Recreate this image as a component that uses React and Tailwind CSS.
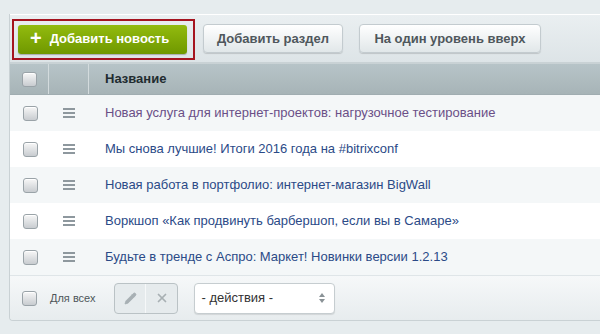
import { Pencil, X } from "lucide-react";

const rows = [
  { title: "Новая услуга для интернет-проектов: нагрузочное тестирование", visited: true },
  { title: "Мы снова лучшие! Итоги 2016 года на #bitrixconf" },
  { title: "Новая работа в портфолио: интернет-магазин BigWall" },
  { title: "Воркшоп «Как продвинуть барбершоп, если вы в Самаре»" },
  { title: "Будьте в тренде с Аспро: Маркет! Новинки версии 1.2.13" },
];

function Check() {
  return (
    <span className="block w-[15px] h-[15px] rounded-[3px] border border-[#9aa3a8] bg-gradient-to-b from-[#f7f7f7] to-[#c8ccd0] shadow-[inset_0_1px_0_#fff]" />
  );
}

function Burger() {
  return (
    <span className="flex flex-col gap-[2px] w-[12px]">
      <span className="h-[2px] bg-[#8e989e]" />
      <span className="h-[2px] bg-[#8e989e]" />
      <span className="h-[2px] bg-[#8e989e]" />
    </span>
  );
}

export default function App() {
  return (
    <div className="w-[600px] h-[334px] overflow-hidden bg-[#e6ecee] pt-[14px] pl-[9px] font-['Liberation_Sans',Arial,sans-serif]">
      <div className="w-[620px] border-l border-b border-[#c9d1d4] rounded-bl-[4px] overflow-hidden">
        {/* toolbar */}
        <div className="h-[48px] border-t border-white bg-gradient-to-b from-[#eaeff1] to-[#dde4e7] flex items-center pl-[2px]">
          <div className="border-2 border-[#a5141f] pl-[4px] pr-[6px] py-[4px] mt-[1px]">
            <button className="h-[29px] w-[169px] rounded-[3px] bg-gradient-to-b from-[#93bb0f] to-[#6f9800] shadow-[0_1px_1px_rgba(0,0,0,0.25)] text-white font-bold text-[13px] flex items-center pl-[12px] gap-[8px]">
              <span className="text-[20px] leading-none font-bold -mt-[2px]">+</span>
              Добавить новость
            </button>
          </div>
          <button className="ml-[8px] h-[29px] w-[140px] rounded-[4px] border border-[#c3cbcf] bg-gradient-to-b from-[#ffffff] to-[#e1e7e9] shadow-[0_1px_1px_rgba(0,0,0,0.15)] text-[#4f575c] font-bold text-[13px]">
            Добавить раздел
          </button>
          <button className="ml-[16px] h-[29px] w-[182px] rounded-[4px] border border-[#c3cbcf] bg-gradient-to-b from-[#ffffff] to-[#e1e7e9] shadow-[0_1px_1px_rgba(0,0,0,0.15)] text-[#4f575c] font-bold text-[13px]">
            На один уровень вверх
          </button>
        </div>

        {/* header */}
        <div className="h-[33px] border-t-2 border-[#c9d2d5] bg-gradient-to-b from-[#b7c4c8] to-[#a7b4b7] flex border-b border-b-[#a0adb1]">
          <div className="w-[39px] flex items-center justify-center pl-[1px] border-r border-[#d3dbdd]">
            <Check />
          </div>
          <div className="w-[40px] border-r border-[#d3dbdd]" />
          <div className="flex-1 flex items-center pl-[16px] text-[13px] font-bold text-[#222c30]">Название</div>
        </div>

        {/* rows */}
        {rows.map((r, i) => (
          <div key={i} className={`h-[36px] flex items-center ${i % 2 === 0 ? "bg-[#f4f7f8]" : "bg-white"}`}>
            <div className="w-[39px] flex justify-center pl-[1px]">
              <Check />
            </div>
            <div className="w-[40px] flex justify-center">
              <Burger />
            </div>
            <div className={`flex-1 pl-[16px] text-[13px] ${r.visited ? "text-[#6a4f87]" : "text-[#2b4a87]"}`}>{r.title}</div>
          </div>
        ))}

        {/* footer */}
        <div className="h-[45px] border-t border-[#dfe5e8] bg-gradient-to-b from-[#f6f8f9] to-[#e7ecee] flex items-center">
          <div className="ml-[12px]">
            <Check />
          </div>
          <span className="ml-[13px] text-[11px] text-[#4d5559]">Для всех</span>
          <div className="ml-[19px] h-[31px] flex rounded-[4px] border border-[#bac2c5] bg-[#e6ebed]">
            <div className="w-[31px] flex items-center justify-center border-r border-[#f6f8f9]">
              <Pencil size={13} className="text-[#a8b0b4]" fill="#a8b0b4" strokeWidth={1.5} />
            </div>
            <div className="w-[31px] flex items-center justify-center">
              <X size={14} className="text-[#a8b0b4]" strokeWidth={3} />
            </div>
          </div>
          <div className="ml-[16px] h-[31px] w-[141px] rounded-[4px] border border-[#c6cdd0] bg-white shadow-[0_1px_1px_rgba(0,0,0,0.1)] flex items-center justify-between pl-[6px] pr-[9px] text-[13px] text-[#333]">
            <span>- действия -</span>
            <span className="flex flex-col items-center gap-[2px]">
              <span className="w-0 h-0 border-l-[3px] border-r-[3px] border-b-[4px] border-l-transparent border-r-transparent border-b-[#8a9296]" />
              <span className="w-0 h-0 border-l-[3px] border-r-[3px] border-t-[4px] border-l-transparent border-r-transparent border-t-[#8a9296]" />
            </span>
          </div>
        </div>
      </div>
    </div>
  );
}
